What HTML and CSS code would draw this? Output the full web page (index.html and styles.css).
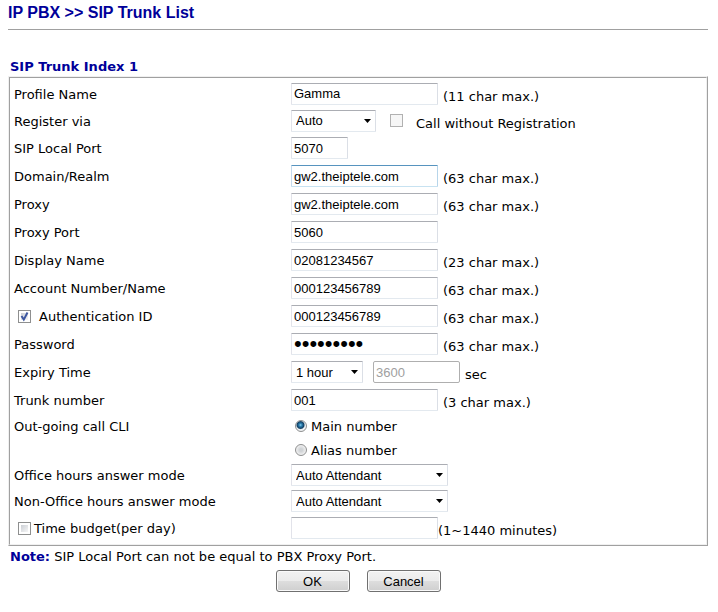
FILE: index.html
```html
<!DOCTYPE html>
<html lang="en">
<head>
  <meta charset="UTF-8" />
  <meta name="viewport" content="width=device-width, initial-scale=1.0" />
  <title>IP PBX - SIP Trunk List</title>
  <link rel="stylesheet" href="styles.css">
</head>
<body>
  <h1>IP PBX &gt;&gt; SIP Trunk List</h1>

  <form>
    <h2>SIP Trunk Index 1</h2>
    <div class="frame">
      <div class="rows">
        <div class="row short">
          <label for="profile">Profile Name</label>
          <div class="field"><input type="text" id="profile" value="Gamma" maxlength="11" /><span class="hint">(11 char max.)</span></div>
        </div>
        <div class="row short">
          <label for="register">Register via</label>
          <div class="field">
            <select id="register" class="interface"><option>Auto</option></select>
            <input type="checkbox" id="noreg" class="noreg" disabled />
            <label for="noreg" class="hint">Call without Registration</label>
          </div>
        </div>
        <div class="row">
          <label for="port">SIP Local Port</label>
          <div class="field"><input type="text" id="port" class="port" value="5070" /></div>
        </div>
        <div class="row">
          <label for="domain">Domain/Realm</label>
          <div class="field"><input type="text" id="domain" class="active" value="gw2.theiptele.com" maxlength="63" /><span class="hint">(63 char max.)</span></div>
        </div>
        <div class="row">
          <label for="proxy">Proxy</label>
          <div class="field"><input type="text" id="proxy" value="gw2.theiptele.com" maxlength="63" /><span class="hint">(63 char max.)</span></div>
        </div>
        <div class="row">
          <label for="proxy-port">Proxy Port</label>
          <div class="field"><input type="text" id="proxy-port" value="5060" /></div>
        </div>
        <div class="row">
          <label for="display">Display Name</label>
          <div class="field"><input type="text" id="display" value="02081234567" maxlength="23" /><span class="hint">(23 char max.)</span></div>
        </div>
        <div class="row">
          <label for="account">Account Number/Name</label>
          <div class="field"><input type="text" id="account" value="000123456789" maxlength="63" /><span class="hint">(63 char max.)</span></div>
        </div>
        <div class="row">
          <div class="option wide">
            <input type="checkbox" id="use-auth" checked />
            <label for="use-auth">Authentication ID</label>
          </div>
          <div class="field"><input type="text" id="auth" aria-label="Authentication ID" value="000123456789" maxlength="63" /><span class="hint">(63 char max.)</span></div>
        </div>
        <div class="row">
          <label for="password">Password</label>
          <div class="field"><input type="password" id="password" value="trunkpass" maxlength="63" /><span class="hint">(63 char max.)</span></div>
        </div>
        <div class="row">
          <label for="expiry">Expiry Time</label>
          <div class="field">
            <select id="expiry" class="expiry"><option>1 hour</option></select>
            <input type="text" id="seconds" class="seconds" value="3600" disabled />
            <label for="seconds" class="hint">sec</label>
          </div>
        </div>
        <div class="row">
          <label for="trunk">Trunk number</label>
          <div class="field"><input type="text" id="trunk" value="001" maxlength="3" /><span class="hint">(3 char max.)</span></div>
        </div>
        <div class="row cli" role="radiogroup" aria-labelledby="cli-label">
          <span id="cli-label" class="cli-label">Out-going call CLI</span>
          <div class="radios">
            <div class="radio"><input type="radio" name="cli" id="main" checked /><label for="main">Main number</label></div>
            <div class="radio"><input type="radio" name="cli" id="alias" /><label for="alias">Alias number</label></div>
          </div>
        </div>
        <div class="row mode">
          <label for="office">Office hours answer mode</label>
          <div class="field"><select id="office"><option>Auto Attendant</option></select></div>
        </div>
        <div class="row mode">
          <label for="non-office">Non-Office hours answer mode</label>
          <div class="field"><select id="non-office"><option>Auto Attendant</option></select></div>
        </div>
        <div class="row">
          <div class="option">
            <input type="checkbox" id="use-budget" />
            <label for="use-budget">Time budget(per day)</label>
          </div>
          <div class="field tight"><input type="text" id="budget" aria-label="Time budget in minutes" /><span class="hint">(1~1440 minutes)</span></div>
        </div>
      </div>
    </div>

    <p class="note"><b>Note:</b> SIP Local Port can not be equal to PBX Proxy Port.</p>
    <div class="buttons">
      <button type="submit">OK</button>
      <button type="button">Cancel</button>
    </div>
  </form>
</body>
</html>
```

FILE: styles.css
```css
* {
  box-sizing: border-box;
}
body {
  margin: 0;
  padding: 3px 10px 20px 8px;
  background-color: #ffffff;
  color: #000000;
  font-family: Verdana, "DejaVu Sans", sans-serif;
  font-size: 13px;
  line-height: 18px;
}
h1 {
  margin: 0 0 28px;
  padding-bottom: 6px;
  border-bottom: 1px solid #a0a0a0;
  color: #000099;
  font-family: Arial, "Liberation Sans", sans-serif;
  font-size: 16px;
  line-height: 20px;
}
h2 {
  margin: 0;
  padding-left: 2px;
  color: #000099;
  font-size: 13px;
  line-height: 18px;
}

/* two-tone ridge around the settings */
.frame {
  border: 1px solid;
  border-color: #f0f0f0 #a0a0a0 #a0a0a0 #f0f0f0;
}
.rows {
  border: 1px solid;
  border-color: #a0a0a0 #f0f0f0 #f0f0f0 #a0a0a0;
  padding: 2px 4px;
}
.row {
  display: grid;
  grid-template-columns: 277px 1fr;
  align-items: center;
  min-height: 28px;
}
.row.short {
  min-height: 27px;
}
.row.mode {
  min-height: 26px;
}
.row.cli {
  align-items: start;
}
.row label {
  padding-top: 2px;
}
.cli-label {
  padding-top: 4px;
}

.field {
  display: flex;
  align-items: center;
}
.field .hint {
  margin-left: 5px;
  padding-top: 6px;
  line-height: 16px;
}
.tight .hint {
  margin-left: 0;
}
.option {
  display: flex;
  align-items: center;
  gap: 3px;
  padding-left: 4px;
}
.option.wide {
  gap: 8px;
}
.radio {
  display: flex;
  align-items: center;
  gap: 4px;
  height: 24px;
  padding-left: 4px;
}

input, select, button {
  margin: 0;
  font-family: Arial, "Liberation Sans", sans-serif;
  font-size: 13px;
  color: #000000;
}
input[type="text"], input[type="password"], select {
  height: 22px;
  border: 1px solid;
  border-color: #abadb3 #dbdfe6 #e3e9ef #e2e3ea;
  border-radius: 1px;
  background-color: #ffffff;
}
input[type="text"], input[type="password"] {
  width: 147px;
  padding: 0 2px;
}
/* larger so the dots read at the size of the text */
input[type="password"] {
  font-size: 22px;
}
input[type="text"].port {
  width: 57px;
}
input[type="text"].active {
  border-color: #5794bf #b7d5ea #c7e2f1 #c5daed;
}
input[type="text"].seconds {
  width: 87px;
  margin-left: 10px;
  border-color: #afafaf;
  border-radius: 2px;
  color: #a0a0a0;
}

select {
  appearance: none;
  width: 157px;
  padding: 0 18px 0 4px;
  background-image: url("data:image/svg+xml,%3Csvg xmlns='http://www.w3.org/2000/svg' width='7' height='4'%3E%3Cpath d='M0 0h7L3.5 4z'/%3E%3C/svg%3E");
  background-repeat: no-repeat;
  background-position: right 4px center;
}
select.interface {
  width: 85px;
}
select.expiry {
  width: 72px;
}

input[type="checkbox"] {
  appearance: none;
  width: 13px;
  height: 13px;
  border: 1px solid #8e8f8f;
  background: linear-gradient(135deg, #cbcfd5, #f6f6f6) content-box #f4f4f4;
  padding: 2px;
}
input[type="checkbox"]:checked {
  background: url("data:image/svg+xml,%3Csvg xmlns='http://www.w3.org/2000/svg' width='11' height='11'%3E%3Cpath d='M2.5 5l2.3 3.6L8.5 1.5' fill='none' stroke='%233c56a0' stroke-width='2'/%3E%3C/svg%3E") border-box no-repeat center, linear-gradient(135deg, #cbcfd5, #f6f6f6) content-box #f4f4f4;
}
input[type="checkbox"]:disabled {
  border-color: #b1b1b1;
  background: #f6f6f6;
}
input.noreg {
  margin-left: 14px;
  margin-right: 8px;
}
input[type="radio"] {
  appearance: none;
  width: 12px;
  height: 12px;
  border: 1px solid #8e8f8f;
  border-radius: 50%;
  background: radial-gradient(circle, #d0d3d6 20%, #f4f4f4 75%);
}
input[type="radio"]:checked {
  background: radial-gradient(circle at 45% 40%, #8fd0ee 0, #2c7fb0 18%, #123f63 42%, #eef1f3 56%);
}

.note {
  margin: 2px 0 4px;
  padding-left: 2px;
}
.note b {
  color: #000099;
}
.buttons {
  display: flex;
  justify-content: center;
  gap: 17px;
}
button {
  width: 74px;
  height: 22px;
  padding: 0;
  border: 1px solid #707070;
  border-radius: 3px;
  background: linear-gradient(#f2f2f2 0%, #ebebeb 50%, #dddddd 51%, #cfcfcf 100%);
  box-shadow: inset 0 0 0 1px #fafafa;
}
```
